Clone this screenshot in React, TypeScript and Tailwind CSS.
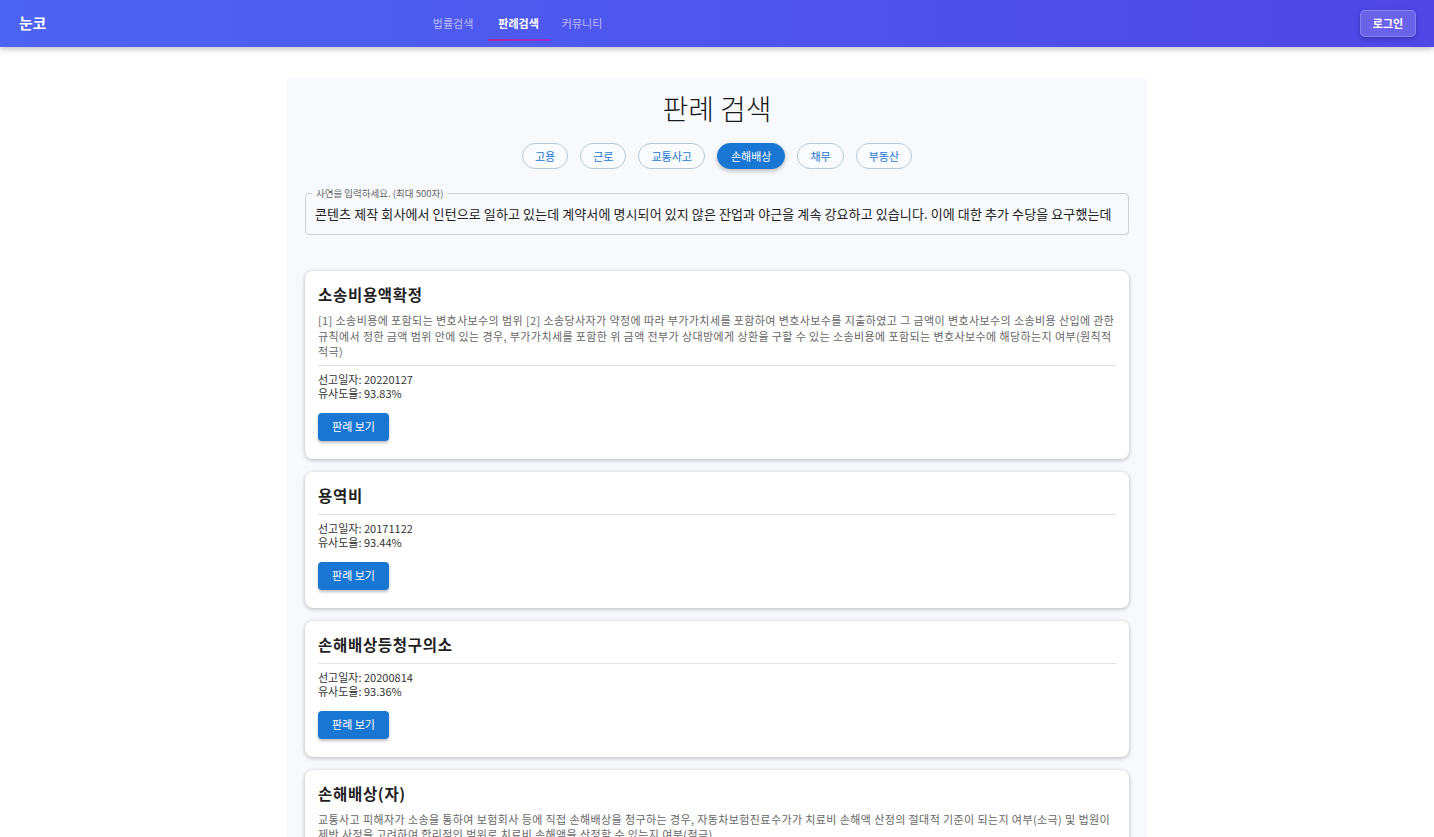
import { useState } from "react";

interface CaseItem {
  title: string;
  summary?: string;
  date: string;
  similarity: string;
}

const categories = ["고용", "근로", "교통사고", "손해배상", "채무", "부동산"];

const cases: CaseItem[] = [
  {
    title: "소송비용액확정",
    summary:
      "[1] 소송비용에 포함되는 변호사보수의 범위 [2] 소송당사자가 약정에 따라 부가가치세를 포함하여 변호사보수를 지출하였고 그 금액이 변호사보수의 소송비용 산입에 관한 규칙에서 정한 금액 범위 안에 있는 경우, 부가가치세를 포함한 위 금액 전부가 상대방에게 상환을 구할 수 있는 소송비용에 포함되는 변호사보수에 해당하는지 여부(원칙적 적극)",
    date: "20220127",
    similarity: "93.83%",
  },
  { title: "용역비", date: "20171122", similarity: "93.44%" },
  { title: "손해배상등청구의소", date: "20200814", similarity: "93.36%" },
  {
    title: "손해배상(자)",
    summary:
      "교통사고 피해자가 소송을 통하여 보험회사 등에 직접 손해배상을 청구하는 경우, 자동차보험진료수가가 치료비 손해액 산정의 절대적 기준이 되는지 여부(소극) 및 법원이 제반 사정을 고려하여 합리적인 범위로 치료비 손해액을 산정할 수 있는지 여부(적극)",
    date: "20190411",
    similarity: "93.12%",
  },
];

const font = {
  fontFamily: '"Noto Sans CJK KR", "Liberation Sans", sans-serif',
};

function Header() {
  return (
    <header className="h-[47px] w-full flex items-center px-[19px] bg-gradient-to-r from-[#4d63f3] to-[#5046e6] shadow-[0_2px_6px_rgba(0,0,0,0.25)] relative z-10">
      <div className="text-white font-bold text-[15px] tracking-tight">눈코</div>
      <nav className="ml-[385px] flex items-center h-full gap-[23px] text-[11px]">
        <a className="text-white/60 px-[2px]">법률검색</a>
        <a className="relative text-white font-bold h-full flex items-center">
          판례검색
          <span className="absolute left-[-10px] right-[-12px] bottom-[6px] h-[2px] rounded bg-gradient-to-r from-[#b3269a] to-[#9b2bd0]" />
        </a>
        <a className="text-white/60">커뮤니티</a>
      </nav>
      <div className="flex-1" />
      <button className="h-[27px] w-[56px] rounded-[5px] bg-white/15 border border-white/20 text-white text-[11px] font-bold shadow-[0_2px_5px_rgba(30,30,120,0.45)] mr-[-1px]">
        로그인
      </button>
    </header>
  );
}

function CaseCard({ item }: { item: CaseItem }) {
  return (
    <div className="bg-white rounded-[8px] shadow-[0_1px_4px_rgba(0,0,0,0.28)] px-[13px] pt-[12px] pb-[18px]">
      <h3 className="text-[15.5px] leading-[22px] font-bold tracking-[0.7px] text-[#1f1f1f] mb-[8px]">
        {item.title}
      </h3>
      {item.summary && (
        <p className="text-[11px] leading-[15.5px] tracking-[0.4px] text-[#666] mb-[5px]">
          {item.summary}
        </p>
      )}
      <div className="border-t border-[#e3e3e3] pt-[6px] text-[11px] leading-[14.5px] text-[#333]">
        <div>선고일자: {item.date}</div>
        <div>유사도율: {item.similarity}</div>
      </div>
      <button className="mt-[12px] h-[28px] w-[71px] rounded-[4px] bg-[#1976d2] text-white text-[11px] shadow-[0_2px_3px_rgba(0,0,0,0.25)]">
        판례 보기
      </button>
    </div>
  );
}

export default function App() {
  const [active, setActive] = useState("손해배상");
  const [story, setStory] = useState(
    "콘텐츠 제작 회사에서 인턴으로 일하고 있는데 계약서에 명시되어 있지 않은 잔업과 야근을 계속 강요하고 있습니다. 이에 대한 추가 수당을 요구했는데"
  );

  return (
    <div className="min-h-screen bg-white" style={font}>
      <Header />
      <main className="w-[860px] mx-auto mt-[31px] bg-[#f7f9fc] rounded-[2px] px-[18px] pt-[12px] pb-[24px]">
        <h1 className="text-center text-[28px] leading-[36px] font-light text-[#1a1a1a]">
          판례 검색
        </h1>
        <div className="flex justify-center gap-[12px] mt-[17px]">
          {categories.map((c) => (
            <button
              key={c}
              onClick={() => setActive(c)}
              className={
                c === active
                  ? "h-[26px] px-[13px] rounded-full bg-[#1976d2] text-white text-[11px] border border-[#1976d2] shadow-[0_2px_4px_rgba(0,0,0,0.25)]"
                  : "h-[26px] px-[12px] rounded-full bg-white/40 text-[#1976d2] text-[11px] border border-[#b9c8d8]"
              }
            >
              {c}
            </button>
          ))}
        </div>
        <div className="relative mt-[24px] border border-[#cfcfcf] rounded-[4px] h-[42px] flex items-center px-[9px]">
          <span className="absolute left-[6px] top-[-8px] px-[4px] bg-[#f7f9fc] text-[9.5px] leading-[14px] text-[#666]">
            사연을 입력하세요. (최대 500자)
          </span>
          <input
            value={story}
            onChange={(e) => setStory(e.target.value)}
            className="w-full bg-transparent outline-none text-[13px] tracking-[0.1px] text-[#222]"
            style={font}
          />
        </div>
        <div className="mt-[36px] flex flex-col gap-[13px]">
          {cases.map((c) => (
            <CaseCard key={c.title} item={c} />
          ))}
        </div>
      </main>
    </div>
  );
}
